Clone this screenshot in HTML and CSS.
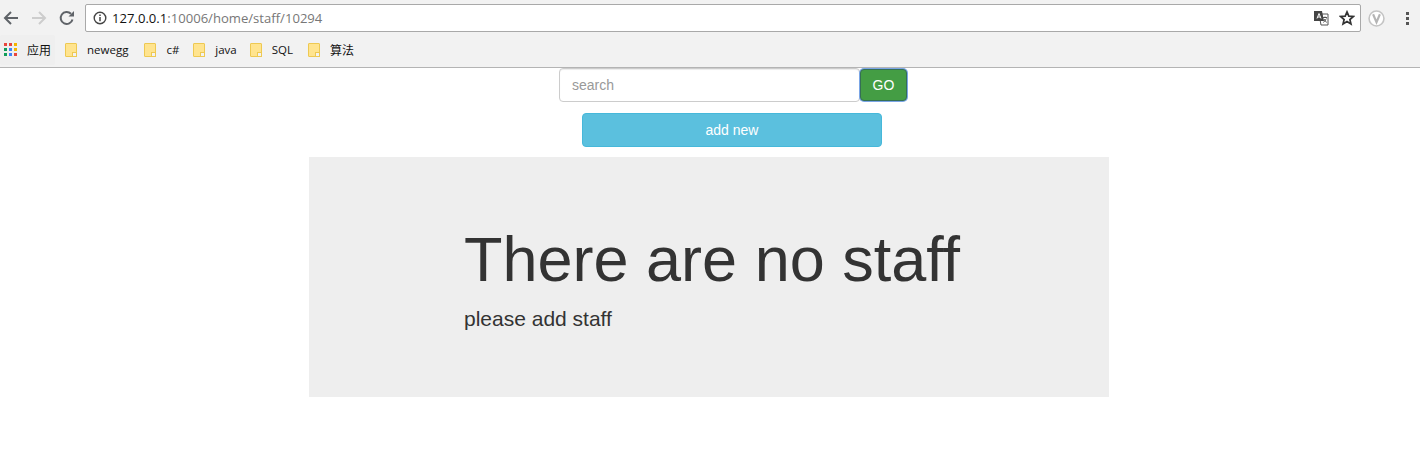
FILE: index.html
```html
<!DOCTYPE html>
<html lang="en">
<head>
    <meta charset="UTF-8">
    <title>staff</title>
    <link rel="stylesheet" href="styles.css">
</head>
<body>

    <!-- Browser toolbar -->
    <header class="chrome">
        <div class="toolbar">
            <svg class="nav-icon back" width="16" height="16" viewBox="0 0 16 16"><path d="M15 8H2.500M8 2 2 8l6 6" fill="none" stroke="#5f6368" stroke-width="2"/></svg>
            <svg class="nav-icon forward" width="16" height="16" viewBox="0 0 16 16"><path d="M1 8h12.500M8 2l6 6-6 6" fill="none" stroke="#cdcdcd" stroke-width="2"/></svg>
            <svg class="nav-icon reload" width="16" height="16" viewBox="0 0 16 16"><path d="M13.500 9.500A6 6 0 1 1 12 3.800" fill="none" stroke="#5f6368" stroke-width="2"/><path d="M9.500 6.500H15V1z" fill="#5f6368"/></svg>
            <div class="omnibox">
                <svg class="info" width="14" height="14" viewBox="0 0 14 14"><circle cx="7" cy="7" r="5.800" fill="none" stroke="#444" stroke-width="1.400"/><path d="M7 6v4.200M7 3.600v1.400" stroke="#444" stroke-width="1.500"/></svg>
                <span class="url"><span class="host">127.0.0.1</span>:10006/home/staff/10294</span>
                <span class="omni-right">
                    <svg width="16" height="16" viewBox="0 0 16 16"><path d="M6 4h9v11H8z" fill="#fff" stroke="#555"/><path d="M1 1h8l2 10H1z" fill="#444"/><path d="M4 8.500 6 3.500l2 5M4.800 7h2.400" fill="none" stroke="#fff"/><path d="M10 7.500h4M12 6.500v1M10.500 12.500l3-4M11 9l2.500 3.500" fill="none" stroke="#444" stroke-width=".9"/></svg>
                    <svg width="16" height="16" viewBox="0 0 15 15"><path d="m7.500 1.800 1.700 3.900 4.200.4-3.200 2.800 1 4.100-3.700-2.200-3.700 2.200 1-4.100L1.600 6.100l4.200-.4z" fill="none" stroke="#333" stroke-width="1.600"/></svg>
                </span>
            </div>
            <svg class="ext" width="17" height="17" viewBox="0 0 16 16"><circle cx="8" cy="8" r="7" fill="#fff" stroke="#c4c4c4" stroke-width="1.500"/><path d="M4.800 4 8 11.500 11.200 4" fill="none" stroke="#b5b5b5" stroke-width="2"/></svg>
            <span class="menu-dots"><i></i><i></i><i></i></span>
        </div>
        <nav class="bookmarks">
            <a class="bookmark apps">
                <svg width="14" height="14" viewBox="0 0 14 14">
                    <rect x="0" y="0" width="3" height="3" fill="#e8453c"/><rect x="5" y="0" width="3" height="3" fill="#e8453c"/><rect x="10" y="0" width="3" height="3" fill="#f4b400"/>
                    <rect x="0" y="5" width="3" height="3" fill="#0f9d58"/><rect x="5" y="5" width="3" height="3" fill="#4285f4"/><rect x="10" y="5" width="3" height="3" fill="#f4b400"/>
                    <rect x="0" y="10" width="3" height="3" fill="#0f9d58"/><rect x="5" y="10" width="3" height="3" fill="#4285f4"/><rect x="10" y="10" width="3" height="3" fill="#e8453c"/>
                </svg>
                <span class="cjk">应用</span>
            </a>
            <a class="bookmark"><span class="folder"></span><span>newegg</span></a>
            <a class="bookmark"><span class="folder"></span><span>c#</span></a>
            <a class="bookmark"><span class="folder"></span><span>java</span></a>
            <a class="bookmark"><span class="folder"></span><span>SQL</span></a>
            <a class="bookmark"><span class="folder"></span><span class="cjk">算法</span></a>
        </nav>
    </header>

    <main class="page">
        <form class="search-row">
            <input class="search-input" type="text" placeholder="search">
            <button class="btn btn-go" type="button">GO</button>
        </form>
        <button class="btn btn-add" type="button">add new</button>
        <section class="jumbotron">
            <h1>There are no staff</h1>
            <p>please add staff</p>
        </section>
    </main>

</body>
</html>
```

FILE: styles.css
```css
/* Reset */
* {
    box-sizing: border-box;
}

body {
    margin: 0;
    background: #fff;
    color: #333;
    font-family: "Liberation Sans", Arial, sans-serif;
    font-size: 14px;
}

/* Browser chrome */
.chrome {
    height: 68px;
    background: #f2f2f2;
    border-bottom: 1px solid #b4b4b4;
}

.toolbar {
    display: flex;
    align-items: center;
    height: 36px;
    padding-left: 3px;
}

.nav-icon {
    flex: none;
    margin-right: 12px;
}

.omnibox {
    display: flex;
    align-items: center;
    width: 1276px;
    height: 28px;
    margin-left: -2px;
    padding: 0 5px 0 7px;
    background: #fff;
    border: 1px solid #a9a9a9;
    border-radius: 2px;
}

.info {
    margin-right: 5px;
}

.url {
    color: #777;
    font-family: "Open Sans", sans-serif;
    font-size: 13.1px;
}

.host {
    color: #111;
}

.omni-right {
    display: flex;
    align-items: center;
    gap: 10px;
    margin-left: auto;
}

.ext {
    margin-left: 7px;
}

.menu-dots {
    display: flex;
    flex-direction: column;
    gap: 2px;
    margin-left: 21px;
}

.menu-dots i {
    display: block;
    width: 3px;
    height: 3px;
    background: #555;
}

/* Bookmarks bar */
.bookmarks {
    display: flex;
    align-items: center;
    height: 27px;
    padding-left: 4px;
    font-family: "Open Sans", "Noto Sans CJK SC", sans-serif;
    font-size: 11.5px;
    color: #111;
}

.bookmark {
    display: flex;
    align-items: center;
    margin-right: 15px;
}

.bookmark:nth-child(2) {
    margin-right: 16px;
}

.bookmark:nth-child(3) {
    margin-right: 14px;
}

.bookmark:nth-child(4) {
    margin-right: 13px;
}

.cjk {
    font-size: 12px;
}

.apps {
    position: relative;
    margin-right: 14px;
}

/* hover highlight behind the apps shortcut */
.apps::before {
    content: "";
    position: absolute;
    inset: -6px -4px -6px -4px;
    background: #efefef;
    border-radius: 2px;
}

.apps svg,
.apps span {
    position: relative;
}

.apps svg {
    margin-right: 9px;
}

.folder {
    position: relative;
    width: 12px;
    height: 14px;
    margin-right: 10px;
    background: #ffe48f;
    border: 1px solid #eec952;
    border-radius: 1px;
}

/* little notch in the folder corner */
.folder::after {
    content: "";
    position: absolute;
    right: -1px;
    bottom: -1px;
    width: 3px;
    height: 3px;
    border: 1px solid #eec952;
    background: #f2f2f2;
}

/* Page content */
.page {
    display: flex;
    flex-direction: column;
    align-items: center;
    padding-right: 2px;
}

.search-row {
    display: flex;
    justify-content: center;
    margin-left: 49px;
}

.search-input {
    width: 301px;
    height: 34px;
    padding: 6px 12px;
    border: 1px solid #ccc;
    border-radius: 4px;
    color: #555;
    font: 14px "Liberation Sans", Arial, sans-serif;
    box-shadow: inset 0 1px 1px rgba(0, 0, 0, .075);
}

.search-input::placeholder {
    color: #999;
}

.btn {
    height: 34px;
    color: #fff;
    font: 14px "Liberation Sans", Arial, sans-serif;
    border-radius: 4px;
}

.btn-go {
    width: 47px;
    height: 32px;
    margin: 1px 1px 1px 0;
    padding: 0;
    background: #449d44;
    border: 1px solid #356f55;
    box-shadow: 0 0 0 1px #7aa5e6;
}

.btn-add {
    width: 300px;
    margin-top: 11px;
    margin-left: 46px;
    background: #5bc0de;
    border: 1px solid #46b8da;
}

.jumbotron {
    width: 800px;
    height: 240px;
    margin-top: 10px;
    padding: 68px 60px 0 155px;
    background: #eee;
}

.jumbotron h1 {
    margin: 0;
    font-size: 63px;
    font-weight: 400;
    line-height: 69px;
}

.jumbotron p {
    margin: 10px 0 0;
    font-size: 21px;
    line-height: 30px;
}
```
